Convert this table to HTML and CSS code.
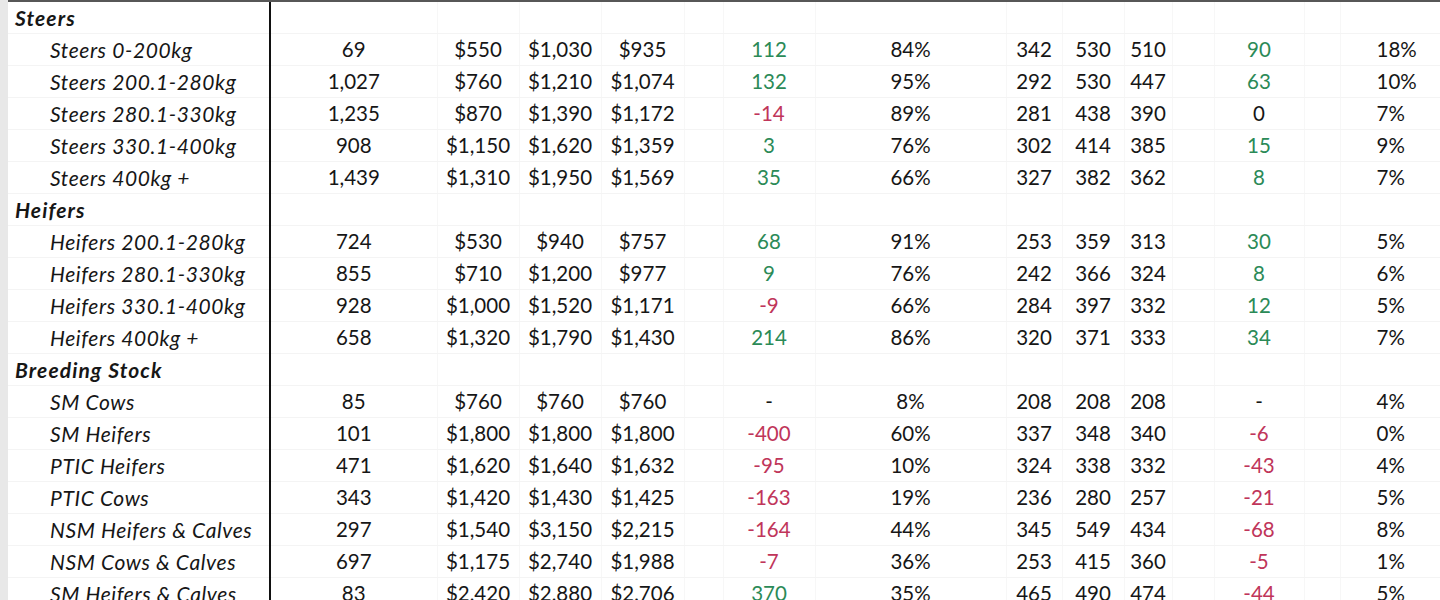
FILE: index.html
```html
<!DOCTYPE html>
<html lang="en">
<head>
<meta charset="utf-8">
<title>Cattle prices</title>
<link rel="stylesheet" href="styles.css">
</head>
<body>
<div class="sheet">
<table class="grid">
<colgroup>
<col class="c-a"><col class="c-b"><col class="c-p"><col class="c-p"><col class="c-e"><col class="c-sp1"><col class="c-f"><col class="c-g"><col class="c-h"><col class="c-i"><col class="c-j"><col class="c-sp2"><col class="c-k"><col class="c-sp3"><col class="c-l">
</colgroup>
<tbody>
<tr class="grp"><td class="lbl head">Steers</td><td></td><td></td><td></td><td></td><td></td><td></td><td></td><td></td><td></td><td></td><td></td><td></td><td></td><td></td></tr>
<tr><td class="lbl">Steers 0-200kg</td><td>69</td><td>$550</td><td>$1,030</td><td>$935</td><td></td><td class="up">112</td><td>84%</td><td>342</td><td>530</td><td>510</td><td></td><td class="up">90</td><td></td><td class="pc">18%</td></tr>
<tr><td class="lbl">Steers 200.1-280kg</td><td>1,027</td><td>$760</td><td>$1,210</td><td>$1,074</td><td></td><td class="up">132</td><td>95%</td><td>292</td><td>530</td><td>447</td><td></td><td class="up">63</td><td></td><td class="pc">10%</td></tr>
<tr><td class="lbl">Steers 280.1-330kg</td><td>1,235</td><td>$870</td><td>$1,390</td><td>$1,172</td><td></td><td class="dn">-14</td><td>89%</td><td>281</td><td>438</td><td>390</td><td></td><td>0</td><td></td><td class="pc">7%</td></tr>
<tr><td class="lbl">Steers 330.1-400kg</td><td>908</td><td>$1,150</td><td>$1,620</td><td>$1,359</td><td></td><td class="up">3</td><td>76%</td><td>302</td><td>414</td><td>385</td><td></td><td class="up">15</td><td></td><td class="pc">9%</td></tr>
<tr><td class="lbl">Steers 400kg +</td><td>1,439</td><td>$1,310</td><td>$1,950</td><td>$1,569</td><td></td><td class="up">35</td><td>66%</td><td>327</td><td>382</td><td>362</td><td></td><td class="up">8</td><td></td><td class="pc">7%</td></tr>
<tr class="grp"><td class="lbl head">Heifers</td><td></td><td></td><td></td><td></td><td></td><td></td><td></td><td></td><td></td><td></td><td></td><td></td><td></td><td></td></tr>
<tr><td class="lbl">Heifers 200.1-280kg</td><td>724</td><td>$530</td><td>$940</td><td>$757</td><td></td><td class="up">68</td><td>91%</td><td>253</td><td>359</td><td>313</td><td></td><td class="up">30</td><td></td><td class="pc">5%</td></tr>
<tr><td class="lbl">Heifers 280.1-330kg</td><td>855</td><td>$710</td><td>$1,200</td><td>$977</td><td></td><td class="up">9</td><td>76%</td><td>242</td><td>366</td><td>324</td><td></td><td class="up">8</td><td></td><td class="pc">6%</td></tr>
<tr><td class="lbl">Heifers 330.1-400kg</td><td>928</td><td>$1,000</td><td>$1,520</td><td>$1,171</td><td></td><td class="dn">-9</td><td>66%</td><td>284</td><td>397</td><td>332</td><td></td><td class="up">12</td><td></td><td class="pc">5%</td></tr>
<tr><td class="lbl">Heifers 400kg +</td><td>658</td><td>$1,320</td><td>$1,790</td><td>$1,430</td><td></td><td class="up">214</td><td>86%</td><td>320</td><td>371</td><td>333</td><td></td><td class="up">34</td><td></td><td class="pc">7%</td></tr>
<tr class="grp"><td class="lbl head">Breeding Stock</td><td></td><td></td><td></td><td></td><td></td><td></td><td></td><td></td><td></td><td></td><td></td><td></td><td></td><td></td></tr>
<tr><td class="lbl">SM Cows</td><td>85</td><td>$760</td><td>$760</td><td>$760</td><td></td><td>-</td><td>8%</td><td>208</td><td>208</td><td>208</td><td></td><td>-</td><td></td><td class="pc">4%</td></tr>
<tr><td class="lbl">SM Heifers</td><td>101</td><td>$1,800</td><td>$1,800</td><td>$1,800</td><td></td><td class="dn">-400</td><td>60%</td><td>337</td><td>348</td><td>340</td><td></td><td class="dn">-6</td><td></td><td class="pc">0%</td></tr>
<tr><td class="lbl">PTIC Heifers</td><td>471</td><td>$1,620</td><td>$1,640</td><td>$1,632</td><td></td><td class="dn">-95</td><td>10%</td><td>324</td><td>338</td><td>332</td><td></td><td class="dn">-43</td><td></td><td class="pc">4%</td></tr>
<tr><td class="lbl">PTIC Cows</td><td>343</td><td>$1,420</td><td>$1,430</td><td>$1,425</td><td></td><td class="dn">-163</td><td>19%</td><td>236</td><td>280</td><td>257</td><td></td><td class="dn">-21</td><td></td><td class="pc">5%</td></tr>
<tr><td class="lbl">NSM Heifers &amp; Calves</td><td>297</td><td>$1,540</td><td>$3,150</td><td>$2,215</td><td></td><td class="dn">-164</td><td>44%</td><td>345</td><td>549</td><td>434</td><td></td><td class="dn">-68</td><td></td><td class="pc">8%</td></tr>
<tr><td class="lbl">NSM Cows &amp; Calves</td><td>697</td><td>$1,175</td><td>$2,740</td><td>$1,988</td><td></td><td class="dn">-7</td><td>36%</td><td>253</td><td>415</td><td>360</td><td></td><td class="dn">-5</td><td></td><td class="pc">1%</td></tr>
<tr><td class="lbl">SM Heifers &amp; Calves</td><td>83</td><td>$2,420</td><td>$2,880</td><td>$2,706</td><td></td><td class="up">370</td><td>35%</td><td>465</td><td>490</td><td>474</td><td></td><td class="dn">-44</td><td></td><td class="pc">5%</td></tr>
</tbody>
</table>
</div>
</body>
</html>
```
FILE: styles.css
```css
html, body {
  margin: 0;
  padding: 0;
  background: #e8e8e8;
  height: 600px;
  overflow: hidden;
}

.sheet {
  margin-left: 8px;
  background: #ffffff;
  height: 600px;
  border-top: 2px solid #575757;
}

.grid {
  border-collapse: collapse;
  table-layout: fixed;
  width: 1432px;
  font-family: Lato, Carlito, Calibri, "Open Sans", sans-serif;
  font-size: 20.5px;
  color: #161616;
}

.c-a { width: 262px; }
.c-b { width: 167px; }
.c-p { width: 82px; }
.c-e { width: 83px; }
.c-sp1 { width: 39px; }
.c-f { width: 92px; }
.c-g { width: 191px; }
.c-h { width: 56px; }
.c-i { width: 62px; }
.c-j { width: 48px; }
.c-sp2 { width: 42px; }
.c-k { width: 90px; }
.c-sp3 { width: 36px; }
.c-l { width: 122px; }

.grid td {
  height: 31px;
  padding: 0;
  text-align: center;
  white-space: nowrap;
  overflow: visible;
  border-bottom: 1px solid #f4f4f4;
  border-right: 1px solid #f7f7f7;
  line-height: 31px;
}

.grid td.lbl {
  text-align: left;
  font-style: italic;
  font-size: 21px;
  letter-spacing: 0.6px;
  padding-left: 42px;
  border-right: 2px solid #111111;
}

.grid td.head {
  font-weight: bold;
  letter-spacing: 1.1px;
  padding-left: 7px;
}

.grid td.up { color: #2b8a57; }
.grid td.dn { color: #c0355a; }

.grid td.pc {
  text-align: left;
  padding-left: 36px;
}
```
